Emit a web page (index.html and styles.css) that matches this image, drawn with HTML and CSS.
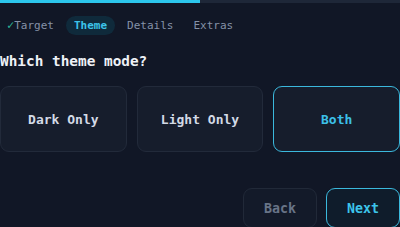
FILE: index.html
```html
<!DOCTYPE html>
<html>
<head>
<meta charset="utf-8">
<link rel="stylesheet" href="styles.css">
</head>
<body>
<div class="wizard">
  <div class="progress"><div class="progress-fill" style="width:50%"></div></div>
  <nav class="tabs">
    <span class="tab done"><span class="check">✓</span>Target</span>
    <span class="tab active">Theme</span>
    <span class="tab">Details</span>
    <span class="tab">Extras</span>
  </nav>
  <h2 class="title">Which theme mode?</h2>
  <div class="options">
    <button class="option">Dark Only</button>
    <button class="option">Light Only</button>
    <button class="option selected">Both</button>
  </div>
  <div class="actions">
    <button class="btn btn-back">Back</button>
    <button class="btn btn-next">Next</button>
  </div>
</div>
</body>
</html>
```
FILE: styles.css
```css
html, body {
  margin: 0;
  padding: 0;
  background: #111726;
  width: 400px;
  height: 227px;
  overflow: hidden;
}
.wizard {
  font-family: "DejaVu Sans Mono", "Liberation Mono", monospace;
  color: #e2e8f0;
}
.progress {
  height: 3px;
  background: #1e2738;
}
.progress-fill {
  height: 100%;
  background: #2cc6ec;
}
.tabs {
  display: flex;
  gap: 4px;
  margin-top: 13px;
  margin-left: -1px;
}
.tab {
  font-size: 11px;
  line-height: 13px;
  padding: 3px 8px;
  border-radius: 999px;
  color: #8592a8;
}
.check {
  color: #2bb59a;
  font-size: 12px;
}
.tab.active {
  background: #0f2a3b;
  color: #3cc4ea;
  font-weight: bold;
}
.title {
  margin: 16px 0 0 0;
  font-size: 14.4px;
  line-height: 20px;
  font-weight: bold;
  color: #eef1f6;
}
.options {
  display: grid;
  grid-template-columns: repeat(3, 1fr);
  gap: 10px;
  margin-top: 15px;
}
.option {
  height: 66px;
  background: #161d2c;
  border: 1px solid #222a3a;
  border-radius: 9px;
  font-family: inherit;
  font-size: 13px;
  font-weight: 600;
  color: #d3dae6;
  padding: 0;
}
.option.selected {
  border-color: #3bb8dc;
  color: #3cc0e8;
}
.actions {
  display: flex;
  justify-content: flex-end;
  gap: 9px;
  margin-top: 36px;
}
.btn {
  height: 40px;
  padding: 0 20px;
  border-radius: 9px;
  font-family: inherit;
  font-size: 13.3px;
  font-weight: bold;
}
.btn-back {
  background: #131a29;
  border: 1px solid #212938;
  color: #687487;
}
.btn-next {
  background: #0f1c2b;
  border: 1px solid #3bb8dc;
  color: #3cc4ea;
}
```
